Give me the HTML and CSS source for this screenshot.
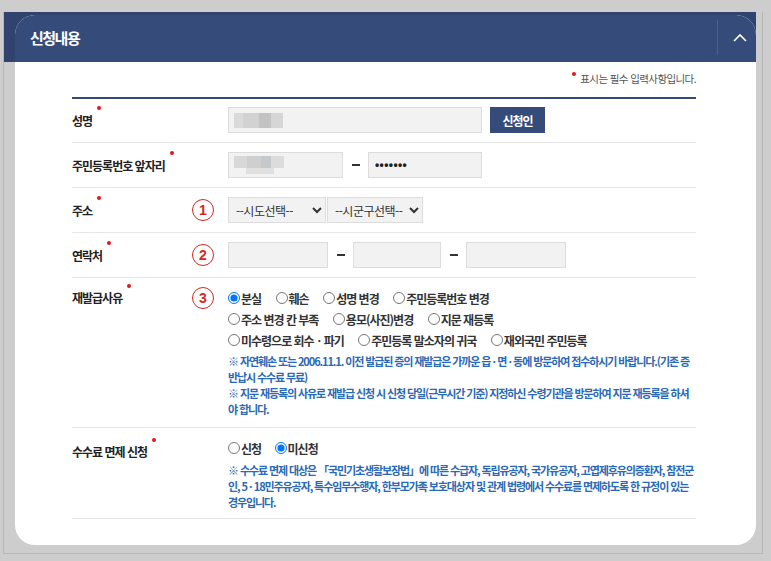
FILE: index.html
```html
<!DOCTYPE html>
<html lang="ko">
<head>
<meta charset="utf-8">
<title>신청내용</title>
<link rel="stylesheet" href="styles.css">
</head>
<body>
<div class="frame">
  <section class="card">
    <header class="card-head">
      <h2 class="card-title">신청내용</h2>
      <button class="toggle" type="button" aria-label="접기">
        <svg width="14" height="9" viewBox="0 0 14 9"><path d="M1 8 L7 2 L13 8" fill="none" stroke="#fff" stroke-width="1.6"/></svg>
      </button>
    </header>
    <div class="card-body">
      <p class="req-note"><span class="req-dot"></span>표시는 필수 입력사항입니다.</p>
      <div class="form">
        <div class="row first">
          <div class="label"><span class="req">성명</span></div>
          <div class="mark"></div>
          <div class="field">
            <div class="box w254"><span class="blur blur-name"></span></div>
            <button class="btn" type="button">신청인</button>
          </div>
        </div>
        <div class="row">
          <div class="label"><span class="req">주민등록번호 앞자리</span></div>
          <div class="mark"></div>
          <div class="field">
            <div class="box w115"><span class="blur blur-id"></span></div>
            <span class="dash"></span>
            <div class="box w114 pw">•••••••</div>
          </div>
        </div>
        <div class="row">
          <div class="label"><span class="req">주소</span></div>
          <div class="mark"><span class="num">1</span></div>
          <div class="field">
            <select class="sel w98"><option>--시도선택--</option></select>
            <select class="sel w96"><option>--시군구선택--</option></select>
          </div>
        </div>
        <div class="row">
          <div class="label"><span class="req">연락처</span></div>
          <div class="mark"><span class="num">2</span></div>
          <div class="field">
            <input class="box w100" type="text">
            <span class="dash"></span>
            <input class="box w88" type="text">
            <span class="dash"></span>
            <input class="box w100" type="text">
          </div>
        </div>
        <div class="row top reason">
          <div class="label"><span class="req">재발급사유</span></div>
          <div class="mark"><span class="num">3</span></div>
          <div class="content">
            <div class="opt-line">
              <label class="opt"><input type="radio" name="r" checked>분실</label>
              <label class="opt"><input type="radio" name="r">훼손</label>
              <label class="opt"><input type="radio" name="r">성명 변경</label>
              <label class="opt"><input type="radio" name="r">주민등록번호 변경</label>
            </div>
            <div class="opt-line">
              <label class="opt"><input type="radio" name="r">주소 변경 칸 부족</label>
              <label class="opt"><input type="radio" name="r">용모(사진)변경</label>
              <label class="opt"><input type="radio" name="r">지문 재등록</label>
            </div>
            <div class="opt-line">
              <label class="opt"><input type="radio" name="r">미수령으로 회수ㆍ파기</label>
              <label class="opt"><input type="radio" name="r">주민등록 말소자의 귀국</label>
              <label class="opt"><input type="radio" name="r">재외국민 주민등록</label>
            </div>
            <div class="note">
              <p>※ 자연훼손 또는 2006.11.1. 이전 발급된 증의 재발급은 가까운 읍<span class="md">·</span>면<span class="md">·</span>동에 방문하여 접수하시기 바랍니다.(기존 증 반납시 수수료 무료)</p>
              <p>※ 지문 재등록의 사유로 재발급 신청 시 신청 당일(근무시간 기준) 지정하신 수령기관을 방문하여 지문 재등록을 하셔야 합니다.</p>
            </div>
          </div>
        </div>
        <div class="row top fee">
          <div class="label"><span class="req">수수료 면제 신청</span></div>
          <div class="mark"></div>
          <div class="content">
            <div class="opt-line">
              <label class="opt tight"><input type="radio" name="f">신청</label>
              <label class="opt tight"><input type="radio" name="f" checked>미신청</label>
            </div>
            <div class="note fee-note">
              <p>※ 수수료 면제 대상은 「국민기초생활보장법」에 따른 수급자, 독립유공자, 국가유공자, 고엽제후유의증환자, 참전군인, 5<span class="md">·</span>18민주유공자, 특수임무수행자, 한부모가족 보호대상자 및 관계 법령에서 수수료를 면제하도록 한 규정이 있는 경우입니다.</p>
            </div>
          </div>
        </div>
      </div>
    </div>
  </section>
</div>
</body>
</html>
```
FILE: styles.css
```css
* { box-sizing: border-box; }

body {
  margin: 0;
  background: #cdcdcd;
  font-family: "Noto Sans CJK KR", "Noto Sans", sans-serif;
}

.frame {
  width: 760px;
  margin: 12px 0 0 3px;
  border: 1px solid #b7b7b7;
  border-top: 0;
  padding: 3px 6px 8px 11px;
  background: linear-gradient(#2f436e, #2f436e) 0 0 / 753px 50px no-repeat border-box, #cdcdcd;
}

.card {
  background: #fff;
  border-radius: 20px;
  overflow: hidden;
}

.card-head {
  display: flex;
  height: 47px;
  background: #354c7a;
}

.card-title {
  flex: 1;
  margin: 0;
  padding-left: 15px;
  color: #fff;
  font-size: 15px;
  font-weight: 700;
  letter-spacing: -1.5px;
  line-height: 45px;
}

.toggle {
  width: 39px;
  margin: 5px 0 7px;
  padding: 0 0 0 6px;
  border: 0;
  border-left: 1px solid rgba(255, 255, 255, 0.12);
  background: transparent;
  display: flex;
  align-items: center;
  justify-content: center;
}

.card-body {
  padding: 0 60px 26px 57px;
}

.req-note {
  margin: 0;
  padding: 8px 0 9px;
  line-height: 18px;
  text-align: right;
  font-size: 10.5px;
  color: #555;
  letter-spacing: -0.6px;
}

.req-dot {
  display: inline-block;
  width: 4px;
  height: 4px;
  border-radius: 50%;
  background: #e3161c;
  margin-right: 4px;
  vertical-align: middle;
  position: relative;
  top: -6px;
}

.form {
  border-top: 2px solid #344a74;
}

.row {
  display: grid;
  grid-template-columns: 120px 36px 1fr;
  align-items: center;
  padding: 9px 0;
  border-bottom: 1px solid #e6e6e6;
}

.row.first { padding-top: 8px; }
.row.top { align-items: start; }
.row.reason { padding-bottom: 10px; }
.row.fee { padding-bottom: 8px; }

.label {
  font-size: 12px;
  font-weight: 700;
  color: #222;
  letter-spacing: -1px;
  line-height: 21px;
}

.fee .label { padding-top: 4px; }

.req::after {
  content: "";
  display: inline-block;
  width: 4px;
  height: 4px;
  border-radius: 50%;
  background: #e3161c;
  margin-left: 5px;
  vertical-align: middle;
  position: relative;
  top: -14px;
}

.mark {
  display: flex;
}

.num {
  display: flex;
  align-items: center;
  justify-content: center;
  width: 22px;
  height: 22px;
  border: 1.6px solid #d6271e;
  border-radius: 50%;
  color: #d6271e;
  font: 700 14px "Liberation Sans", Arial, sans-serif;
}

.field {
  display: flex;
  align-items: center;
  height: 26px;
}

.box {
  height: 26px;
  margin: 0;
  padding: 0 5px;
  background: #f2f2f2;
  border: 1px solid #dcdcdc;
  border-radius: 0;
  display: flex;
  align-items: center;
  font: 12px "Noto Sans CJK KR", sans-serif;
}

.w254 { width: 254px; }
.w115 { width: 115px; }
.w114 { width: 114px; }
.w100 { width: 100px; }
.w88 { width: 88px; }
.w98 { width: 98px; }
.w96 { width: 96px; }

.blur { display: block; }

.blur-name {
  width: 49px;
  height: 15px;
  background: linear-gradient(90deg, #dadada 0 9px, #d2d2d2 9px 25px, #c3c3c3 25px 37px, #d6d6d6 37px 49px);
}

.blur-id {
  width: 50px;
  height: 18px;
  background:
    linear-gradient(90deg, #d8d8d8 0 13px, #cfcfcf 13px 27px, #c6c9cc 27px 37px, #dcdcdc 37px 50px) 0 0 / 50px 12px no-repeat,
    linear-gradient(90deg, transparent 0 12px, #e0e0e0 12px 40px, transparent 40px) 0 12px / 50px 6px no-repeat;
}

.pw {
  padding-left: 6px;
  font: 700 12px "Liberation Sans", Arial, sans-serif;
  letter-spacing: 0.4px;
  color: #222;
}

.btn {
  width: 55px;
  height: 26px;
  margin-left: 8px;
  border: 0;
  background: #354c7a;
  color: #fff;
  font: 700 12px "Noto Sans CJK KR", sans-serif;
  letter-spacing: -1px;
}

.dash {
  width: 25px;
  display: flex;
  justify-content: center;
}

.dash::before {
  content: "";
  width: 8px;
  height: 2px;
  background: #333;
}

.sel {
  height: 26px;
  margin: 0 1px 0 0;
  padding: 0 2px 0 3px;
  background: #f2f2f2;
  border: 1px solid #dcdcdc;
  border-radius: 0;
  color: #333;
  font: 12px "Noto Sans CJK KR", sans-serif;
  letter-spacing: -0.5px;
}

.opt-line {
  line-height: 21px;
  height: 21px;
  white-space: nowrap;
}

.opt {
  display: inline-flex;
  align-items: center;
  margin-right: 10px;
  font-size: 12px;
  font-weight: 700;
  color: #333;
  letter-spacing: -1px;
}

.opt input {
  width: 12px;
  height: 12px;
  margin: 0 1px 0 0;
}

.opt.tight { margin-right: 9px; }

.note {
  margin-top: 3px;
  font-size: 11px;
  font-weight: 700;
  color: #2a69b5;
  line-height: 16px;
  letter-spacing: -1.1px;
}

.note p { margin: 0; }

.md { margin: 0 2.2px; }

.fee-note { margin-top: 4px; }
```
